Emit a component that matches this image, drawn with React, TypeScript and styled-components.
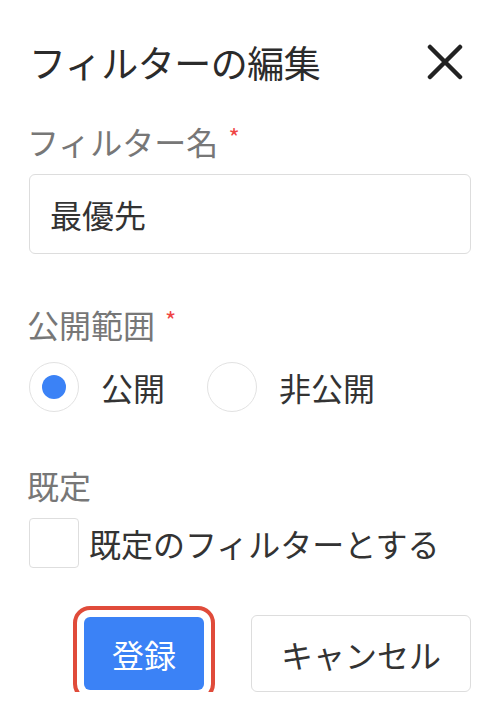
import { FC, useState } from "react";
import styled, { createGlobalStyle } from "styled-components";

const GlobalStyle = createGlobalStyle`
  html, body {
    margin: 0;
    padding: 0;
    background: #ffffff;
  }
  body {
    font-family: "Noto Sans CJK JP", "Noto Sans", sans-serif;
    color: #333333;
  }
  * {
    box-sizing: border-box;
  }
`;

const Dialog = styled.div`
  width: 500px;
  padding: 40px 29px 0 29px;
  display: flex;
  flex-direction: column;
`;

const Header = styled.div`
  display: flex;
  align-items: center;
  justify-content: space-between;
  height: 44px;
`;

const Title = styled.h2`
  margin: 0;
  font-size: 37px;
  font-weight: 400;
  line-height: 44px;
  color: #2b2b2b;
  letter-spacing: -0.5px;
`;

const CloseButton = styled.button`
  border: none;
  background: none;
  padding: 0;
  margin-right: 8px;
  width: 36px;
  height: 36px;
  display: flex;
  align-items: center;
  justify-content: center;
  cursor: pointer;
  & svg {
    stroke: #222222;
  }
`;

const Field = styled.div<{ $top: number }>`
  display: flex;
  flex-direction: column;
  margin-top: ${(p) => p.$top}px;
`;

const Label = styled.label`
  font-size: 32px;
  line-height: 36px;
  color: #777777;
  display: flex;
  align-items: flex-start;
  margin-left: -2px;
`;

const Required = styled.span`
  color: #ef4444;
  font-size: 24px;
  line-height: 24px;
  margin-left: 10px;
  margin-top: 2px;
`;

const TextInput = styled.input`
  margin-top: 15px;
  height: 80px;
  width: 100%;
  border: 1.5px solid #dddddd;
  border-radius: 6px;
  padding: 0 20px;
  font-family: inherit;
  font-size: 32px;
  color: #333333;
  outline: none;
`;

const RadioRow = styled.div`
  display: flex;
  align-items: center;
  gap: 42px;
  margin-top: 20px;
`;

const RadioOption = styled.label`
  display: flex;
  align-items: center;
  gap: 22px;
  font-size: 32px;
  line-height: 50px;
  color: #333333;
  cursor: pointer;
`;

const RadioCircle = styled.span<{ $checked: boolean }>`
  width: 50px;
  height: 50px;
  border-radius: 50%;
  border: 1.5px solid #e2e2e2;
  display: flex;
  align-items: center;
  justify-content: center;
  &::after {
    content: "";
    width: 24px;
    height: 24px;
    border-radius: 50%;
    background: ${(p) => (p.$checked ? "#3b82f6" : "transparent")};
  }
`;

const CheckRow = styled.label`
  display: flex;
  align-items: center;
  gap: 10px;
  margin-top: 15px;
  font-size: 32px;
  line-height: 50px;
  color: #333333;
  cursor: pointer;
`;

const CheckBox = styled.span<{ $checked: boolean }>`
  width: 50px;
  height: 50px;
  border: 1.5px solid #dedede;
  border-radius: 4px;
  background: ${(p) => (p.$checked ? "#3b82f6" : "#ffffff")};
`;

const Actions = styled.div`
  display: flex;
  justify-content: flex-end;
  align-items: center;
  gap: 47px;
  margin-top: 47px;
`;

const Button = styled.button<{ $primary?: boolean }>`
  font-family: inherit;
  font-size: 32px;
  border-radius: 6px;
  cursor: pointer;
  height: ${(p) => (p.$primary ? 73 : 77)}px;
  padding: 0 ${(p) => (p.$primary ? 28 : 29)}px;
  background: ${(p) => (p.$primary ? "#3b82f6" : "#ffffff")};
  color: ${(p) => (p.$primary ? "#ffffff" : "#333333")};
  border: ${(p) => (p.$primary ? "none" : "1.5px solid #dddddd")};
  outline: ${(p) => (p.$primary ? "4px solid #e04b3a" : "none")};
  outline-offset: 7px;
`;

const App: FC = () => {
  const [visibility, setVisibility] = useState("public");
  const [isDefault, setIsDefault] = useState(false);

  return (
    <>
      <GlobalStyle />
      <Dialog>
        <Header>
          <Title>フィルターの編集</Title>
          <CloseButton aria-label="閉じる">
            <svg width="36" height="36" viewBox="0 0 36 36" fill="none" strokeWidth="4.5" strokeLinecap="round">
              <path d="M3 3 L33 33 M33 3 L3 33" />
            </svg>
          </CloseButton>
        </Header>

        <Field $top={39}>
          <Label>
            フィルター名<Required>*</Required>
          </Label>
          <TextInput defaultValue="最優先" />
        </Field>

        <Field $top={52}>
          <Label>
            公開範囲<Required>*</Required>
          </Label>
          <RadioRow>
            <RadioOption onClick={() => setVisibility("public")}>
              <RadioCircle $checked={visibility === "public"} />
              公開
            </RadioOption>
            <RadioOption onClick={() => setVisibility("private")}>
              <RadioCircle $checked={visibility === "private"} />
              非公開
            </RadioOption>
          </RadioRow>
        </Field>

        <Field $top={55}>
          <Label>既定</Label>
          <CheckRow onClick={() => setIsDefault(!isDefault)}>
            <CheckBox $checked={isDefault} />
            既定のフィルターとする
          </CheckRow>
        </Field>

        <Actions>
          <Button $primary>登録</Button>
          <Button>キャンセル</Button>
        </Actions>
      </Dialog>
    </>
  );
};

export default App;
